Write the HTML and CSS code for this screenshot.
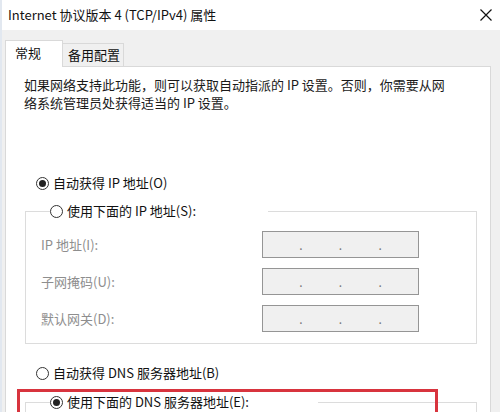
FILE: index.html
```html
<!DOCTYPE html>
<html lang="zh-CN">

<head>
    <meta charset="UTF-8">
    <title>Internet 协议版本 4 (TCP/IPv4) 属性</title>
    <link rel="stylesheet" href="styles.css">
</head>

<body>
    <div class="window">
        <div class="titlebar">
            <span class="title">Internet 协议版本 4 (TCP/IPv4) 属性</span>
            <svg class="close" width="12" height="12" viewBox="0 0 12 12">
                <path d="M0.5 0.5 L11.5 11.5 M11.5 0.5 L0.5 11.5" stroke="#111" stroke-width="1.2" fill="none" />
            </svg>
        </div>

        <div class="tabs">
            <div class="tab active">常规</div>
            <div class="tab">备用配置</div>
        </div>

        <div class="panel">
            <p class="desc">如果网络支持此功能，则可以获取自动指派的 IP 设置。否则，你需要从网络系统管理员处获得适当的 IP 设置。</p>

            <div class="option auto-ip"><span class="radio checked"></span>自动获得 IP 地址(O)</div>

            <fieldset class="group">
                <legend class="option"><span class="radio"></span>使用下面的 IP 地址(S):</legend>
                <div class="field">
                    <span class="field-label">IP 地址(I):</span>
                    <div class="ip"><span>.</span><span>.</span><span>.</span></div>
                </div>
                <div class="field">
                    <span class="field-label">子网掩码(U):</span>
                    <div class="ip"><span>.</span><span>.</span><span>.</span></div>
                </div>
                <div class="field">
                    <span class="field-label">默认网关(D):</span>
                    <div class="ip"><span>.</span><span>.</span><span>.</span></div>
                </div>
            </fieldset>

            <div class="option auto-dns"><span class="radio"></span>自动获得 DNS 服务器地址(B)</div>

            <fieldset class="group dns">
                <legend class="option"><span class="radio checked"></span>使用下面的 DNS 服务器地址(E):</legend>
            </fieldset>

            <div class="highlight"></div>
        </div>
    </div>
</body>

</html>
```

FILE: styles.css
```css
* {
    margin: 0px;
    padding: 0px;
    box-sizing: border-box;
}

html,
body {
    width: 500px;
    height: 412px;
    overflow: hidden;
}

body {
    background: #f0f0f0;
    font-family: "Noto Sans CJK SC", sans-serif;
    font-size: 13px;
    color: #111;
}

.window {
    height: 412px;
    border-left: 2px solid #e2e8f0;
}

.titlebar {
    height: 30px;
    background: #fff;
    display: flex;
    align-items: center;
    justify-content: space-between;
    padding: 0 8px 0 6px;
}

.title {
    font-size: 13px;
    line-height: 16px;
    color: #111;
}

.close {
    display: block;
}

.tabs {
    height: 36px;
    display: flex;
    align-items: flex-end;
    padding-left: 3px;
}

.tab {
    height: 23px;
    line-height: 21px;
    border: 1px solid #d9d9d9;
    border-bottom: none;
    background: #f0f0f0;
    font-size: 13px;
    color: #111;
    width: 61px;
    padding-left: 5px;
    border-left: none;
}

.tab.active {
    position: relative;
    z-index: 1;
    height: 27px;
    line-height: 24px;
    width: 58px;
    padding-left: 9px;
    background: #fff;
    border-left: 1px solid #d9d9d9;
    margin-bottom: -1px;
}

.panel {
    position: relative;
    height: 400px;
    margin: 0 9px 0 3px;
    background: #fff;
    border: 1px solid #d9d9d9;
    padding: 0 13px 0 19px;
}

.desc {
    width: 430px;
    margin: 9px 0 0 -1px;
    line-height: 18px;
    color: #1a1a1a;
}

.option {
    display: flex;
    align-items: center;
    height: 18px;
    line-height: 18px;
    color: #111;
    white-space: nowrap;
}

.radio {
    width: 13px;
    height: 13px;
    border: 1px solid #333;
    border-radius: 50%;
    background: #fff;
    margin-right: 4px;
    display: flex;
    align-items: center;
    justify-content: center;
    flex-shrink: 0;
}

.radio.checked::after {
    content: "";
    width: 7px;
    height: 7px;
    border-radius: 50%;
    background: #222;
}

.auto-ip {
    margin-top: 62px;
    padding-left: 11px;
}

.group {
    margin: 10px 0 0 0;
    min-width: 0;
    border: 1px solid #dcdcdc;
    padding: 11px 0 11px 15px;
}

.group legend {
    width: 218px;
    margin-left: 9px;
    padding: 0;
}

.group.dns legend {
    width: 268px;
}

.field {
    display: flex;
    align-items: center;
    height: 27px;
}

.field + .field {
    margin-top: 10px;
}

.field-label {
    width: 221px;
    color: #8e8e8e;
    line-height: 18px;
}

.ip {
    width: 157px;
    height: 27px;
    background: #f0f0f0;
    border: 1px solid #959595;
    display: flex;
    justify-content: space-evenly;
    align-items: center;
    color: #777;
    font-size: 12px;
    line-height: 12px;
}

.auto-dns {
    margin-top: 20px;
    padding-left: 11px;
}

.group.dns {
    margin-top: 11px;
    height: 60px;
}

.highlight {
    position: absolute;
    left: 11px;
    top: 322px;
    width: 421px;
    height: 120px;
    border: 3px solid #d8343e;
}
```
